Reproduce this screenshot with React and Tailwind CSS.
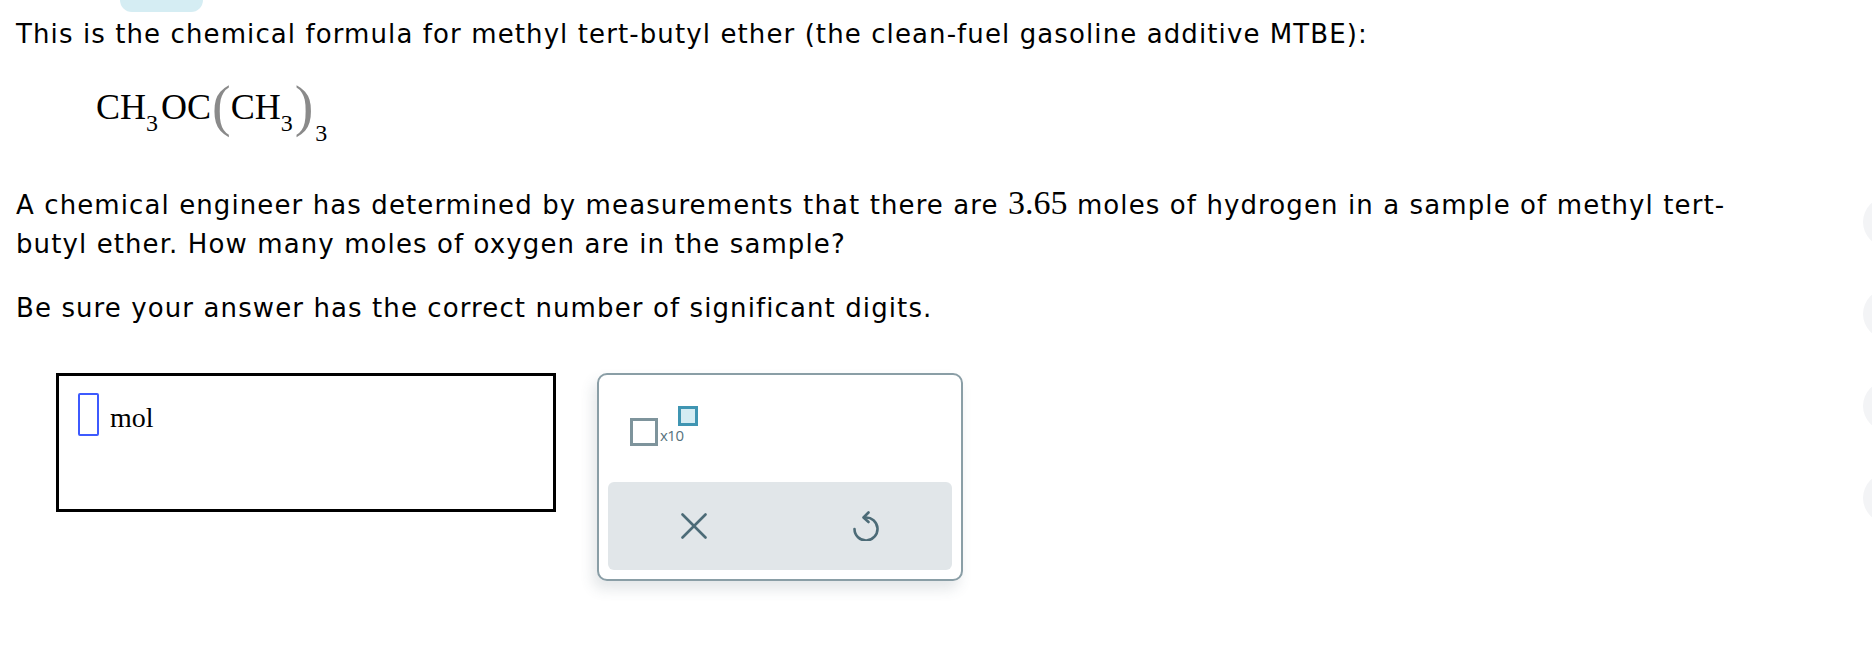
import { useState } from "react";

function Formula() {
  return (
    <div className="mt-[24px] h-[60px] pl-[80px] font-['Liberation_Serif',serif] text-[36px] leading-[50px] text-black whitespace-nowrap tracking-normal">
      <span>CH</span>
      <span className="text-[24px] leading-none align-[-12px]">3</span>
      <span className="ml-[3px]">OC</span>
      <span className="text-[56px] leading-none text-[#8a8a8a] ml-[1px] align-[-6px]">(</span>
      <span>CH</span>
      <span className="text-[24px] leading-none align-[-12px]">3</span>
      <span className="text-[56px] leading-none text-[#8a8a8a] ml-[2px] align-[-6px]">)</span>
      <span className="text-[24px] leading-none align-[-22px] ml-[2px]">3</span>
    </div>
  );
}

function AnswerBox() {
  return (
    <div className="w-[500px] h-[139px] border-[3px] border-black bg-white flex items-start pl-[19px] pt-[17px]">
      <div className="w-[21px] h-[43px] border-2 border-[#3d5afe] rounded-[2px]"></div>
      <span className="ml-[11px] mt-[8px] font-['Liberation_Serif',serif] text-[28px] leading-[34px] tracking-normal text-black">mol</span>
    </div>
  );
}

function Keypad() {
  const [hover, setHover] = useState(false);
  return (
    <div className="w-[366px] h-[208px] border-2 border-[#8a9ea6] rounded-[10px] bg-white shadow-[-4px_8px_14px_rgba(60,80,90,0.14)] flex flex-col px-[9px] pb-[9px] tracking-normal">
      <div className="flex-1 relative">
        <div className="absolute left-[22px] top-[43px] w-[28px] h-[28px] border-[3px] border-[#7e949c]"></div>
        <span className="absolute left-[52px] top-[50px] font-['Open_Sans',sans-serif] text-[15px] leading-[20px] tracking-[-0.5px] text-[#56717c]">x10</span>
        <div className="absolute left-[70px] top-[31px] w-[20px] h-[20px] border-[3px] border-[#3f95b2] bg-[#d4ecf3]"></div>
      </div>
      <div
        className={"h-[88px] rounded-[6px] grid grid-cols-2 items-center " + (hover ? "bg-[#dde3e6]" : "bg-[#e1e6e9]")}
        onMouseEnter={() => setHover(true)}
        onMouseLeave={() => setHover(false)}
      >
        <div className="flex justify-center">
          <svg width="26" height="26" viewBox="0 0 26 26" fill="none" stroke="#4c6b77" strokeWidth="2.6" strokeLinecap="round">
            <path d="M1.5 1.5 L24.5 24.5" />
            <path d="M24.5 1.5 L1.5 24.5" />
          </svg>
        </div>
        <div className="flex justify-center">
          <svg width="28" height="30" viewBox="0 0 28 30" fill="none" stroke="#4c6b77" strokeWidth="2.6" strokeLinecap="round" strokeLinejoin="round">
            <path d="M13 6.5 A11.5 11.5 0 1 1 2.5 18" />
            <path d="M16.5 1.5 L11.5 6.5 L16.5 11" />
          </svg>
        </div>
      </div>
    </div>
  );
}

export default function App() {
  return (
    <div className="relative w-[1872px] h-[660px] overflow-hidden bg-white">
      <div className="ml-[120px] w-[83px] h-[12px] rounded-b-[12px] bg-[#d5edf3]"></div>
      <div className="pl-[16px] font-['DejaVu_Sans',sans-serif] text-[26px] tracking-[1.1px] text-black">
        <p className="mt-[3px] leading-[39px] whitespace-nowrap">
          This is the chemical formula for methyl tert-butyl ether (the clean-fuel gasoline additive MTBE):
        </p>
        <Formula />
        <div className="mt-[48px] leading-[39px]">
          <p className="whitespace-nowrap">
            A chemical engineer has determined by measurements that there are{" "}
            <span className="font-['Liberation_Serif',serif] text-[34px] leading-none tracking-normal">3.65</span> moles of
            hydrogen in a sample of methyl tert-
          </p>
          <p className="whitespace-nowrap">butyl ether. How many moles of oxygen are in the sample?</p>
        </div>
        <p className="mt-[25px] leading-[39px] whitespace-nowrap">
          Be sure your answer has the correct number of significant digits.
        </p>
        <div className="mt-[45px] ml-[40px] flex items-start gap-[41px]">
          <AnswerBox />
          <Keypad />
        </div>
      </div>
      <div className="absolute right-[-41px] top-[197px] flex flex-col gap-[42px]">
        <div className="w-[50px] h-[50px] rounded-full bg-[#f3f4f6]"></div>
        <div className="w-[50px] h-[50px] rounded-full bg-[#f3f4f6]"></div>
        <div className="w-[50px] h-[50px] rounded-full bg-[#f3f4f6]"></div>
        <div className="w-[50px] h-[50px] rounded-full bg-[#f3f4f6]"></div>
      </div>
    </div>
  );
}
